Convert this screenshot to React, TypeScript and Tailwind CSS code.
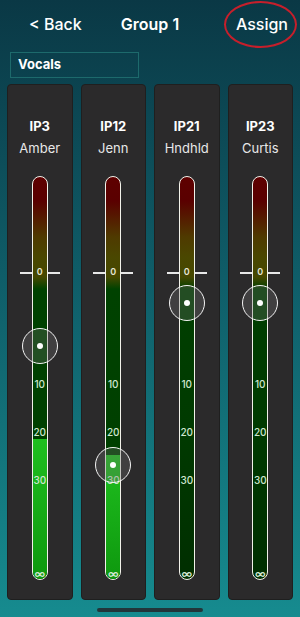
import React from "react";

type Channel = {
  id: string;
  name: string;
  knob: number; // px from track top
  fill?: number; // px from track top, where bright meter starts
  dim?: boolean;
};

const channels: Channel[] = [
  { id: "IP3", name: "Amber", knob: 170, fill: 263 },
  { id: "IP12", name: "Jenn", knob: 289, fill: 279 },
  { id: "IP21", name: "Hndhld", knob: 127, dim: true },
  { id: "IP23", name: "Curtis", knob: 127, dim: true },
];

const marks = [
  { label: "10", top: 208 },
  { label: "20", top: 256 },
  { label: "30", top: 304 },
];

function Fader({ ch }: { ch: Channel }) {
  return (
    <div className="relative mt-[20px] h-[404px] w-[16px]">
      <div
        className={
          ch.dim
            ? "absolute inset-0 overflow-hidden rounded-full border-[1.5px] border-[#f2f2ea] bg-[linear-gradient(to_bottom,#5e0000_0px,#5a0000_24px,#4f3a00_60px,#4a4700_80px,#464800_100px,#003f00_112px,#003a00_250px,#002e00_100%)]"
            : "absolute inset-0 overflow-hidden rounded-full border-[1.5px] border-[#f2f2ea] bg-[linear-gradient(to_bottom,#5e0000_0px,#5a0000_24px,#4f3a00_60px,#4a4700_80px,#464800_100px,#004200_112px,#003e00_100%)]"
        }
      >
        {ch.fill !== undefined && (
          <div
            className="absolute inset-x-0 bottom-0 bg-[linear-gradient(to_bottom,#1fbf1f,#0e980e)]"
            style={{ top: ch.fill - 1.5 }}
          />
        )}
      </div>

      {/* 0 dB tick */}
      <div className="absolute left-[-12px] right-[-12px] top-[96px] flex items-center">
        <div className="h-[1.5px] w-[12px] bg-[#e8e8e8]" />
        <div className="w-[16px]" />
        <div className="h-[1.5px] w-[12px] bg-[#e8e8e8]" />
      </div>
      <div className="absolute inset-x-0 top-[89px] text-center text-[9px] font-semibold leading-[14px] text-[#e6e6d6]">
        0
      </div>

      {marks.map((m) => (
        <div
          key={m.label}
          className="absolute left-[-6px] right-[-6px] text-center text-[10px] font-medium leading-[14px] text-[#cfe6cf]"
          style={{ top: m.top - 7 }}
        >
          {m.label}
        </div>
      ))}
      <div className="absolute inset-x-0 top-[391px] text-center text-[11px] font-semibold leading-[14px] text-[#cfe6cf]">
        ∞
      </div>

      {/* knob */}
      <div
        className="absolute left-1/2 flex h-[36px] w-[36px] -translate-x-1/2 items-center justify-center rounded-full border-[1.5px] border-[#f4f4f4] bg-[rgba(110,110,110,0.32)]"
        style={{ top: ch.knob - 18 }}
      >
        <div className="h-[6px] w-[6px] rounded-full bg-white" />
      </div>
    </div>
  );
}

export default function App() {
  return (
    <div className="flex h-[617px] w-[300px] flex-col overflow-hidden bg-[linear-gradient(to_bottom,#0a3845,#0f5d68_45%,#168b8f)] font-['Inter',sans-serif] text-white">
      <header className="grid h-[48px] grid-cols-3 items-center text-[16px] font-medium">
        <span className="justify-self-start pl-[29px]">&lt; Back</span>
        <span className="justify-self-center font-semibold">Group 1</span>
        <span className="relative justify-self-end pr-[12px]">
          Assign
          <span className="absolute -left-[12px] right-[3px] -top-[11px] -bottom-[12px] rounded-[50%] border-2 border-[#c61f2b]" />
        </span>
      </header>

      <div className="ml-[10px] mt-[4px] flex h-[26px] w-[129px] items-center border border-[#1d6a6c] pl-[7px] text-[13px] font-bold">
        Vocals
      </div>

      <div className="mt-[6px] flex gap-[8px] px-[7px]">
        {channels.map((ch) => (
          <div
            key={ch.id}
            className="flex h-[516px] flex-1 flex-col items-center rounded-[4px] border border-[#1f1f1f] bg-[#2b2a2b] pt-[33px]"
          >
            <div className="text-[13px] font-bold leading-[16px]">{ch.id}</div>
            <div className="mt-[6px] text-[13px] leading-[16px] text-[#e8e8e8]">{ch.name}</div>
            <Fader ch={ch} />
          </div>
        ))}
      </div>

      <div className="mx-auto mt-[8px] h-[4px] w-[106px] rounded-full bg-[#22363a]" />
    </div>
  );
}
